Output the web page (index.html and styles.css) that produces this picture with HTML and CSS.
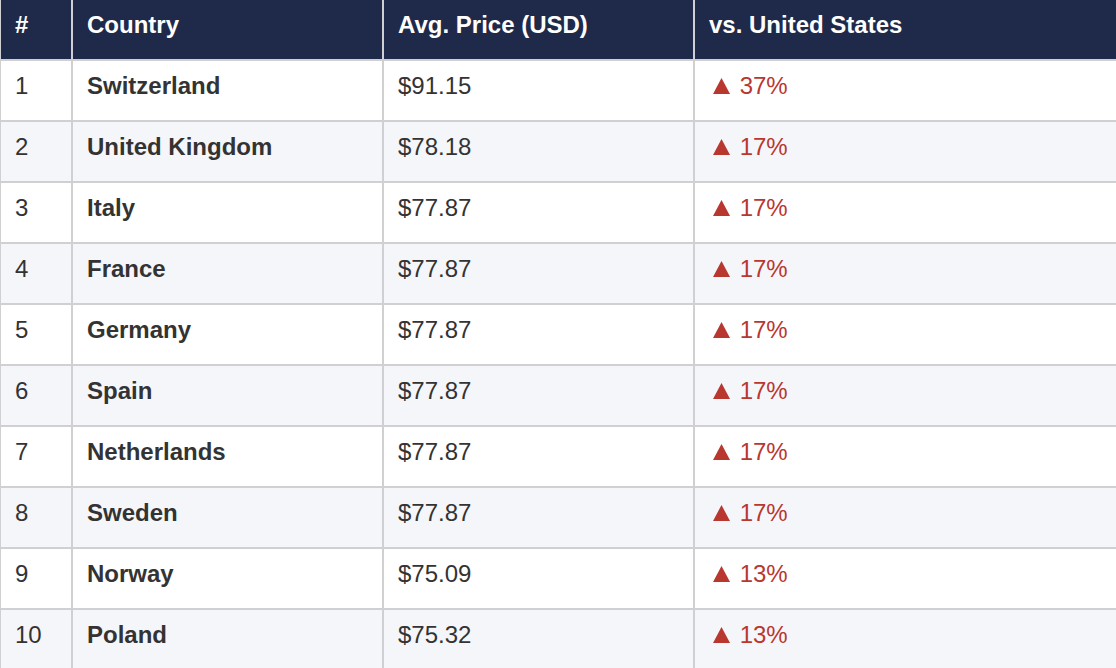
FILE: index.html
```html
<!DOCTYPE html>
<html lang="en">
<head>
<meta charset="utf-8">
<title>Average Price by Country</title>
<link rel="stylesheet" href="styles.css">
</head>
<body>
<table class="price-table">
  <thead>
    <tr>
      <th class="col-rank">#</th>
      <th class="col-country">Country</th>
      <th class="col-price">Avg. Price (USD)</th>
      <th class="col-diff">vs. United States</th>
    </tr>
  </thead>
  <tbody>
    <tr><td>1</td><td class="country">Switzerland</td><td>$91.15</td><td class="diff"><svg class="tri" viewBox="0 0 17 16" aria-hidden="true"><path d="M8.5 0 L17 16 L0 16 Z"/></svg> 37%</td></tr>
    <tr><td>2</td><td class="country">United Kingdom</td><td>$78.18</td><td class="diff"><svg class="tri" viewBox="0 0 17 16" aria-hidden="true"><path d="M8.5 0 L17 16 L0 16 Z"/></svg> 17%</td></tr>
    <tr><td>3</td><td class="country">Italy</td><td>$77.87</td><td class="diff"><svg class="tri" viewBox="0 0 17 16" aria-hidden="true"><path d="M8.5 0 L17 16 L0 16 Z"/></svg> 17%</td></tr>
    <tr><td>4</td><td class="country">France</td><td>$77.87</td><td class="diff"><svg class="tri" viewBox="0 0 17 16" aria-hidden="true"><path d="M8.5 0 L17 16 L0 16 Z"/></svg> 17%</td></tr>
    <tr><td>5</td><td class="country">Germany</td><td>$77.87</td><td class="diff"><svg class="tri" viewBox="0 0 17 16" aria-hidden="true"><path d="M8.5 0 L17 16 L0 16 Z"/></svg> 17%</td></tr>
    <tr><td>6</td><td class="country">Spain</td><td>$77.87</td><td class="diff"><svg class="tri" viewBox="0 0 17 16" aria-hidden="true"><path d="M8.5 0 L17 16 L0 16 Z"/></svg> 17%</td></tr>
    <tr><td>7</td><td class="country">Netherlands</td><td>$77.87</td><td class="diff"><svg class="tri" viewBox="0 0 17 16" aria-hidden="true"><path d="M8.5 0 L17 16 L0 16 Z"/></svg> 17%</td></tr>
    <tr><td>8</td><td class="country">Sweden</td><td>$77.87</td><td class="diff"><svg class="tri" viewBox="0 0 17 16" aria-hidden="true"><path d="M8.5 0 L17 16 L0 16 Z"/></svg> 17%</td></tr>
    <tr><td>9</td><td class="country">Norway</td><td>$75.09</td><td class="diff"><svg class="tri" viewBox="0 0 17 16" aria-hidden="true"><path d="M8.5 0 L17 16 L0 16 Z"/></svg> 13%</td></tr>
    <tr><td>10</td><td class="country">Poland</td><td>$75.32</td><td class="diff"><svg class="tri" viewBox="0 0 17 16" aria-hidden="true"><path d="M8.5 0 L17 16 L0 16 Z"/></svg> 13%</td></tr>
  </tbody>
</table>
</body>
</html>
```
FILE: styles.css
```css
html, body {
  margin: 0;
  padding: 0;
  background: #ffffff;
  overflow: hidden;
}

.price-table {
  width: 1116px;
  border-collapse: separate;
  border-spacing: 0;
  table-layout: fixed;
  font-family: "Liberation Sans", Arial, Helvetica, sans-serif;
  font-size: 24px;
  color: #333333;
}

.price-table th,
.price-table td {
  box-sizing: border-box;
  height: 60px;
  padding: 11px 14px 20px;
  line-height: 28px;
  text-align: left;
  vertical-align: top;
  border-right: 2px solid #d0d0d2;
  border-bottom: 2px solid #d0d0d2;
  white-space: nowrap;
}

.price-table th:first-child,
.price-table td:first-child {
  border-left: 1px solid #d0d0d2;
}

.price-table th:last-child,
.price-table td:last-child {
  border-right: none;
}

.price-table th {
  background: #1f2a4a;
  color: #ffffff;
  font-weight: bold;
}

.col-rank { width: 73px; }
.col-country { width: 311px; }
.col-price { width: 311px; }

.price-table tbody tr:nth-child(even) td {
  background: #f5f6fa;
}

.country {
  font-weight: bold;
}

.diff {
  color: #b8372f;
}

.diff .tri {
  width: 17px;
  height: 16px;
  margin-left: 4px;
  margin-right: 3px;
  vertical-align: baseline;
  fill: currentColor;
}
```
